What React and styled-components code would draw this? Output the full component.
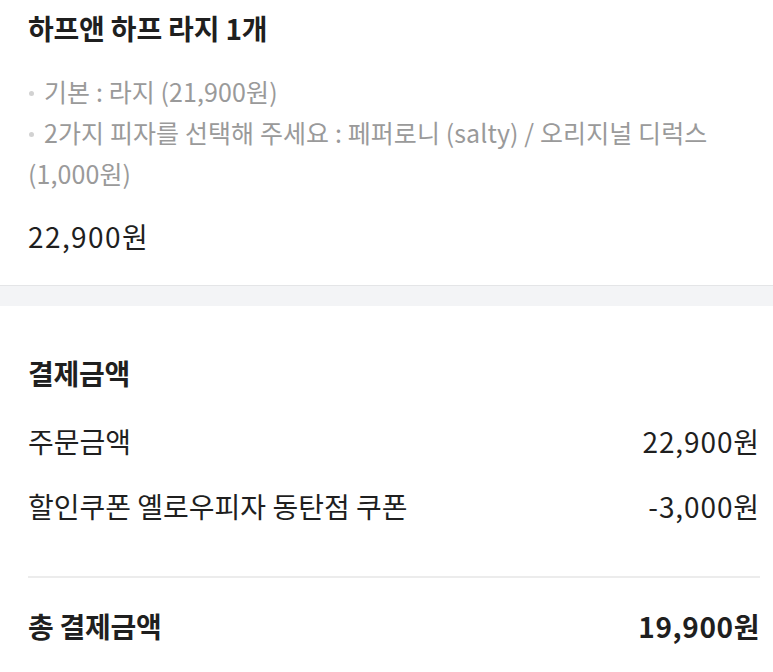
import React from "react";
import styled, { createGlobalStyle } from "styled-components";

const Global = createGlobalStyle`
  html, body { margin: 0; padding: 0; background: #fff; }
  body { font-family: "Noto Sans CJK KR", "Noto Sans", sans-serif; color: #222; }
  * { box-sizing: border-box; }
`;

const Page = styled.div`
  width: 773px;
  display: flex;
  flex-direction: column;
`;

const Section = styled.section`
  display: flex;
  flex-direction: column;
  padding: ${(p) => p.$pad};
`;

const Title = styled.h2`
  margin: 0;
  font-size: 28px;
  font-weight: 700;
  letter-spacing: -0.2px;
  line-height: 36px;
  color: #1f1f1f;
`;

const OptionList = styled.ul`
  list-style: none;
  margin: 25px 0 0;
  padding: 0;
`;

const Option = styled.li`
  font-size: 25px;
  line-height: 41px;
  letter-spacing: 0.1px;
  color: #9a9a9a;
`;

const Dot = styled.span`
  display: inline-block;
  width: 5px;
  height: 5px;
  border-radius: 50%;
  background: #d2d2d2;
  vertical-align: middle;
  margin: 0 10px 3px 1px;
`;

const Price = styled.div`
  margin-top: 24px;
  font-size: 28px;
  line-height: 36px;
  letter-spacing: 1.4px;
  color: #1f1f1f;
`;

const Band = styled.div`
  height: 21px;
  background: #f3f4f6;
  border-top: 1px solid #e4e5e7;
`;

const SectionTitle = styled.h3`
  margin: 0 0 32px;
  font-size: 28px;
  font-weight: 700;
  letter-spacing: -0.3px;
  line-height: 36px;
  color: #1f1f1f;
`;

const Row = styled.div`
  display: flex;
  justify-content: space-between;
  align-items: center;
  margin-top: ${(p) => p.$mt || 0}px;
  font-size: 28px;
  font-weight: ${(p) => (p.$total ? 700 : 400)};
  line-height: 36px;
  color: #1f1f1f;
`;

const Label = styled.span`
  letter-spacing: ${(p) => (p.$total ? "-0.3px" : "0")};
`;

const Amount = styled.span`
  letter-spacing: ${(p) => (p.$total ? "0.6px" : "0.9px")};
`;

const Divider = styled.hr`
  margin: 52px 0 0;
  border: 0;
  border-top: 2px solid #ececec;
`;

export default function App() {
  return (
    <Page>
      <Global />
      <Section $pad="10px 13px 31px 28px">
        <Title>하프앤 하프 라지 1개</Title>
        <OptionList>
          <Option>
            <Dot />
            기본 : 라지 (21,900원)
          </Option>
          <Option>
            <Dot />
            2가지 피자를 선택해 주세요 : 페퍼로니 (salty) / 오리지널 디럭스 (1,000원)
          </Option>
        </OptionList>
        <Price>22,900원</Price>
      </Section>
      <Band />
      <Section $pad="49px 13px 40px 28px">
        <SectionTitle>결제금액</SectionTitle>
        <Row>
          <Label>주문금액</Label>
          <Amount>22,900원</Amount>
        </Row>
        <Row $mt={29}>
          <Label>할인쿠폰 옐로우피자 동탄점 쿠폰</Label>
          <Amount>-3,000원</Amount>
        </Row>
        <Divider />
        <Row $total $mt={30}>
          <Label $total>총 결제금액</Label>
          <Amount $total>19,900원</Amount>
        </Row>
      </Section>
    </Page>
  );
}
